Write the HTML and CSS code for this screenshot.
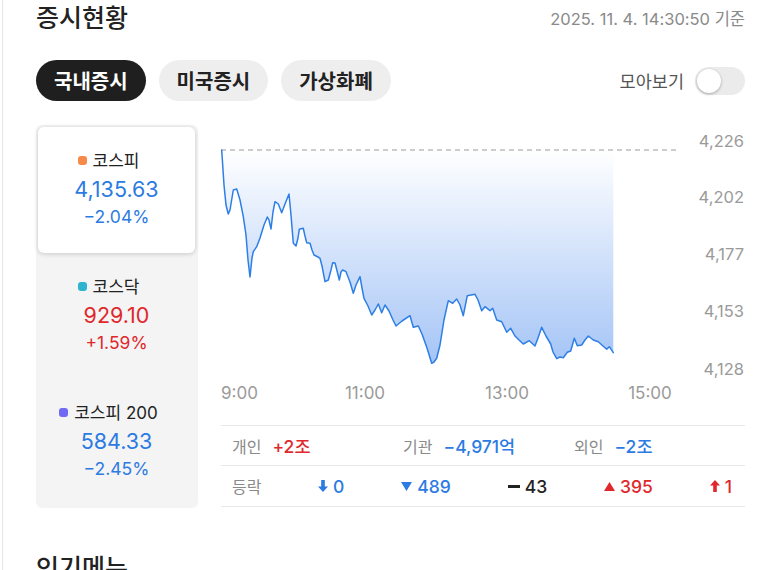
FILE: index.html
```html
<!DOCTYPE html>
<html lang="ko">
<head>
  <meta charset="UTF-8" />
  <meta name="viewport" content="width=device-width, initial-scale=1.0"/>
  <title>증시현황</title>
  <link rel="stylesheet" href="styles.css">
</head>
<body>
  <div class="page">
    <div class="head">
      <h2>증시현황</h2>
      <span class="stamp">2025. 11. 4. 14:30:50 기준</span>
    </div>

    <div class="tabbar">
      <div class="tabs">
        <button class="tab active">국내증시</button>
        <button class="tab">미국증시</button>
        <button class="tab">가상화폐</button>
      </div>
      <label class="collect">
        모아보기
        <span class="switch"><span class="knob"></span></span>
      </label>
    </div>

    <div class="market">
      <ul class="indexes">
        <li class="idx selected">
          <span class="name"><i class="dot orange"></i>코스피</span>
          <span class="value down">4,135.63</span>
          <span class="rate down">−2.04%</span>
        </li>
        <li class="idx">
          <span class="name"><i class="dot teal"></i>코스닥</span>
          <span class="value up">929.10</span>
          <span class="rate up">+1.59%</span>
        </li>
        <li class="idx">
          <span class="name"><i class="dot purple"></i>코스피 200</span>
          <span class="value down">584.33</span>
          <span class="rate down">−2.45%</span>
        </li>
      </ul>

      <div class="board">
        <svg class="chart" width="524" height="300" viewBox="221 125 524 300">
          <defs>
            <linearGradient id="area" x1="0" y1="150" x2="0" y2="364" gradientUnits="userSpaceOnUse">
              <stop offset="0" stop-color="#ffffff"/>
              <stop offset="1" stop-color="#a4c4f6"/>
            </linearGradient>
          </defs>
          <path fill="url(#area)" d="M221.7,150 L224,185 L226,205 L228.3,214 L230,210 L233.3,190 L236.7,189 L240,200 L243.3,216.7 L246,235 L248,260 L250,277 L252,258 L253.3,251.7 L256.7,246.7 L260,238 L264,225 L267.3,217 L269,220 L271,229 L273,212 L275,201.7 L278.3,204 L281.7,212.7 L285,204 L289,194 L291,215 L293.3,243.3 L296,246 L298,238 L299.3,229.3 L303.3,228.3 L305,236 L306.7,242.7 L310,243.3 L312,250 L314,255 L318,257 L320,258.3 L322,266 L325,281.7 L328.3,280 L331,270 L332.7,262.7 L335,263 L336,266.7 L339.3,280 L341,272 L342.7,270 L346,271.7 L350,282 L353.3,293.3 L356,285 L360,276.7 L362,288 L364,298.3 L368,306 L371.7,315 L375,310 L378.3,304 L381.7,312.7 L385,305 L389,311 L393,320 L396,326 L402,321 L410,315.7 L413.3,327.3 L418.3,326 L422,334 L427,348 L431.7,363.3 L434,362 L436.7,358.3 L440,345 L444,320 L448.3,300.7 L452.7,303.3 L456.7,299 L460,305 L463.3,315.7 L467.3,295.7 L475,294.3 L478,300 L481.7,310.7 L485,306.7 L490,310.7 L492.7,308.3 L496.7,320 L501.7,321.7 L506.7,332.3 L510.7,328.3 L515,336 L519,340 L523.3,344 L529.3,340.7 L535,346 L538,338 L541.7,327.3 L546,336 L550.7,344 L553,352 L556.7,358.7 L560,357 L563.3,357.7 L567.3,352.3 L570.7,351 L574.3,338.3 L577.3,345.7 L581.7,345 L585,340 L588.3,336 L593.3,340 L598.3,341.7 L602.7,345.7 L606.7,349.3 L609.3,346.7 L613.3,352.7 L613.3,150 Z"/>
          <line class="base" x1="221" y1="150" x2="677" y2="150"/>
          <polyline class="line" points="221.7,150 224,185 226,205 228.3,214 230,210 233.3,190 236.7,189 240,200 243.3,216.7 246,235 248,260 250,277 252,258 253.3,251.7 256.7,246.7 260,238 264,225 267.3,217 269,220 271,229 273,212 275,201.7 278.3,204 281.7,212.7 285,204 289,194 291,215 293.3,243.3 296,246 298,238 299.3,229.3 303.3,228.3 305,236 306.7,242.7 310,243.3 312,250 314,255 318,257 320,258.3 322,266 325,281.7 328.3,280 331,270 332.7,262.7 335,263 336,266.7 339.3,280 341,272 342.7,270 346,271.7 350,282 353.3,293.3 356,285 360,276.7 362,288 364,298.3 368,306 371.7,315 375,310 378.3,304 381.7,312.7 385,305 389,311 393,320 396,326 402,321 410,315.7 413.3,327.3 418.3,326 422,334 427,348 431.7,363.3 434,362 436.7,358.3 440,345 444,320 448.3,300.7 452.7,303.3 456.7,299 460,305 463.3,315.7 467.3,295.7 475,294.3 478,300 481.7,310.7 485,306.7 490,310.7 492.7,308.3 496.7,320 501.7,321.7 506.7,332.3 510.7,328.3 515,336 519,340 523.3,344 529.3,340.7 535,346 538,338 541.7,327.3 546,336 550.7,344 553,352 556.7,358.7 560,357 563.3,357.7 567.3,352.3 570.7,351 574.3,338.3 577.3,345.7 581.7,345 585,340 588.3,336 593.3,340 598.3,341.7 602.7,345.7 606.7,349.3 609.3,346.7 613.3,352.7"/>
          <g class="ylab">
            <text x="744" y="147">4,226</text>
            <text x="744" y="203">4,202</text>
            <text x="744" y="260">4,177</text>
            <text x="744" y="317">4,153</text>
            <text x="744" y="375">4,128</text>
          </g>
          <g class="xlab">
            <text x="221" y="399">9:00</text>
            <text x="365" y="399" text-anchor="middle">11:00</text>
            <text x="507" y="399" text-anchor="middle">13:00</text>
            <text x="650" y="399" text-anchor="middle">15:00</text>
          </g>
        </svg>

        <div class="row flows">
          <div class="cell"><span class="lbl">개인</span><b class="up">+2조</b></div>
          <div class="cell"><span class="lbl">기관</span><b class="down">−4,971억</b></div>
          <div class="cell"><span class="lbl">외인</span><b class="down">−2조</b></div>
        </div>
        <div class="row breadth">
          <span class="lbl">등락</span>
          <div class="counts">
            <b class="down"><svg width="10" height="12" viewBox="0 0 10 12"><path d="M3.2 0h3.6v6.5H10L5 12 0 6.5h3.2z"/></svg>0</b>
            <b class="down"><svg width="11" height="9" viewBox="0 0 11 9"><path d="M0 0h11L5.5 9z"/></svg>489</b>
            <b class="flat"><i class="bar"></i>43</b>
            <b class="up"><svg width="11" height="9" viewBox="0 0 11 9"><path d="M5.5 0L11 9H0z"/></svg>395</b>
            <b class="up"><svg width="10" height="12" viewBox="0 0 10 12"><path d="M5 0l5 5.5H6.8V12H3.2V5.5H0z"/></svg>1</b>
          </div>
        </div>
      </div>
    </div>

    <h2 class="next">인기메뉴</h2>
  </div>
</body>
</html>
```

FILE: styles.css
```css
* {
  box-sizing: border-box;
}
body {
  margin: 0;
  font-family: Inter, "Noto Sans CJK KR", sans-serif;
  color: #222;
  background-color: #fff;
}
.page {
  margin-left: 2px;
  border-left: 1px solid #e6e6e6;
  padding: 3px 20px 0 33px;
  min-height: 570px;
}
h2 {
  margin: 0;
  font-size: 25px;
  line-height: 30px;
  font-weight: 500;
}
.head {
  display: flex;
  justify-content: space-between;
  align-items: center;
}
.stamp {
  font-size: 16.5px;
  color: #8a8a8a;
}
.tabbar {
  display: flex;
  justify-content: space-between;
  align-items: center;
  margin-top: 27px;
}
.tabs {
  display: flex;
  gap: 13px;
}
.tab {
  height: 41px;
  padding: 0 18px;
  border: none;
  border-radius: 21px;
  background-color: #eeeeee;
  color: #222;
  font-family: inherit;
  font-size: 20px;
  font-weight: 700;
}
.tab.active {
  background-color: #1f1f1f;
  color: #fff;
}
.collect {
  display: flex;
  align-items: center;
  gap: 11px;
  font-size: 17.5px;
  color: #555;
}
.switch {
  display: flex;
  align-items: center;
  width: 50px;
  height: 28px;
  padding: 0 2px;
  border-radius: 14px;
  background-color: #ebebeb;
}
.knob {
  width: 24px;
  height: 24px;
  border-radius: 50%;
  background-color: #fff;
  box-shadow: 0 1px 3px rgba(0,0,0,0.3);
}
.market {
  display: grid;
  grid-template-columns: 162px 524px;
  gap: 23px;
  margin-top: 24px;
}
.indexes {
  list-style: none;
  margin: 0;
  padding: 2px 3px 3px 2px;
  background-color: #f4f4f4;
  border-radius: 6px;
}
.idx {
  height: 126px;
  padding-bottom: 3px;
  display: flex;
  flex-direction: column;
  align-items: center;
  justify-content: center;
}
.idx.selected {
  background-color: #fff;
  border-radius: 6px;
  box-shadow: 0 1px 5px rgba(0,0,0,0.18);
}
.name {
  display: flex;
  align-items: center;
  gap: 6px;
  margin-right: 16px;
  font-size: 17px;
  line-height: 26px;
}
.dot {
  width: 9px;
  height: 9px;
  border-radius: 3px;
}
.orange { background-color: #f58a4b; }
.teal { background-color: #2fb4cf; }
.purple { background-color: #6f69f3; }
.value {
  font-size: 21.5px;
  line-height: 30px;
}
.rate {
  font-size: 17.5px;
  line-height: 26px;
}
.up { color: #e0282c; }
.down { color: #2b7be2; }
.flat { color: #222; }
.chart {
  display: block;
}
.chart .base {
  stroke: #9a9a9a;
  stroke-width: 1;
  stroke-dasharray: 5 4;
}
.chart .line {
  fill: none;
  stroke: #2d7fe6;
  stroke-width: 1.5;
  stroke-linejoin: round;
  stroke-linecap: round;
}
.chart text {
  font-family: Inter, "Noto Sans CJK KR", sans-serif;
  fill: #9a9a9a;
}
.ylab text {
  font-size: 16.5px;
  text-anchor: end;
}
.xlab text {
  font-size: 17px;
}
.row {
  display: flex;
  align-items: center;
  border-top: 1px solid #e8e8e8;
  padding-left: 11px;
}
.flows {
  height: 40px;
}
.breadth {
  height: 42px;
  border-bottom: 1px solid #e8e8e8;
  padding-right: 13px;
}
.cell {
  flex: 1;
  display: flex;
  align-items: center;
  gap: 11px;
}
.lbl {
  font-size: 16px;
  color: #8a8a8a;
}
.row b {
  font-size: 17.5px;
  font-weight: 500;
}
.breadth .lbl {
  width: 86px;
}
.counts {
  flex: 1;
  display: flex;
  justify-content: space-between;
}
.counts b {
  display: flex;
  align-items: center;
  gap: 5px;
}
.counts svg {
  fill: currentColor;
}
.bar {
  width: 12px;
  height: 3px;
  background-color: #222;
}
.next {
  margin-top: 45px;
}
```
